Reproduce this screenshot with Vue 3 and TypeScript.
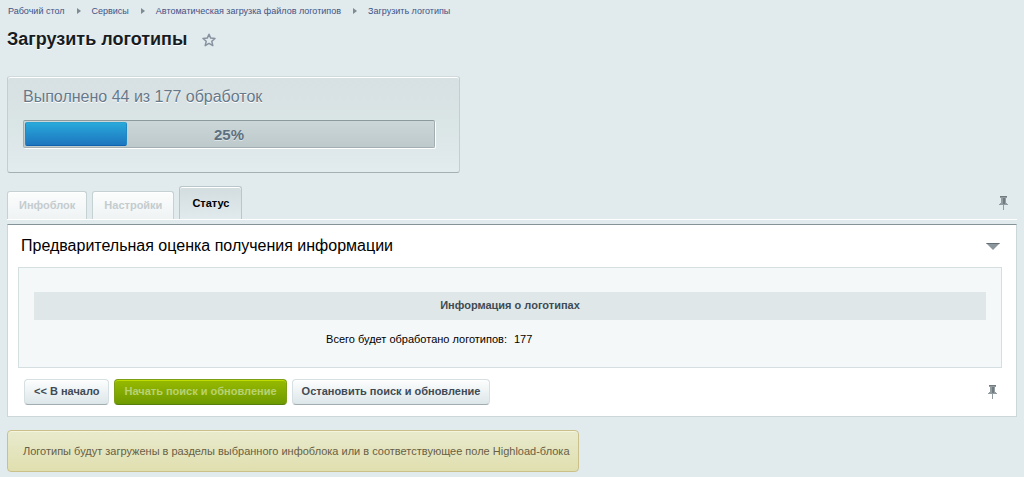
<script setup lang="ts">
import { ref } from 'vue'

interface Crumb {
  label: string
}

interface Tab {
  id: string
  label: string
  disabled: boolean
}

const crumbs: Crumb[] = [
  { label: 'Рабочий стол' },
  { label: 'Сервисы' },
  { label: 'Автоматическая загрузка файлов логотипов' },
  { label: 'Загрузить логотипы' },
]

const tabs: Tab[] = [
  { id: 'iblock', label: 'Инфоблок', disabled: true },
  { id: 'settings', label: 'Настройки', disabled: true },
  { id: 'status', label: 'Статус', disabled: false },
]

const activeTab = ref('status')
const done = ref(44)
const total = ref(177)
const percent = ref(25)
</script>

<template>
  <main class="page">
    <nav class="crumbs" aria-label="Навигация">
      <template v-for="(crumb, i) in crumbs" :key="crumb.label">
        <svg v-if="i > 0" class="crumb-arrow" viewBox="0 0 4 6" aria-hidden="true">
          <path d="M0 0 4 3 0 6Z" fill="#7d8b93" />
        </svg>
        <a href="#">{{ crumb.label }}</a>
      </template>
    </nav>

    <header class="heading">
      <h1>Загрузить логотипы</h1>
      <button class="icon-button" type="button" aria-label="Добавить в избранное">
        <svg width="14" height="14" viewBox="0 0 14 14" aria-hidden="true">
          <path
            d="M7 1.2 8.7 5.1 13 5.5 9.8 8.3 10.8 12.6 7 10.4 3.2 12.6 4.2 8.3 1 5.5 5.3 5.1Z"
            fill="none"
            stroke="#8792a0"
            stroke-width="1.5"
            stroke-linejoin="round"
          />
        </svg>
      </button>
    </header>

    <section class="progress-card">
      <div class="progress-title">Выполнено {{ done }} из {{ total }} обработок</div>
      <div
        class="bar"
        role="progressbar"
        :aria-valuenow="percent"
        aria-valuemin="0"
        aria-valuemax="100"
      >
        <div class="bar-fill" :style="{ width: percent + '%' }"></div>
        <span class="bar-label">{{ percent }}%</span>
      </div>
    </section>

    <div class="tab-row">
      <div class="tabs" role="tablist">
        <button
          v-for="tab in tabs"
          :key="tab.id"
          type="button"
          role="tab"
          class="tab"
          :class="{ active: tab.id === activeTab }"
          :aria-selected="tab.id === activeTab"
          :disabled="tab.disabled"
          @click="activeTab = tab.id"
        >
          {{ tab.label }}
        </button>
      </div>
      <button class="icon-button pin" type="button" aria-label="Закрепить вкладки">
        <svg width="9" height="14" viewBox="0 0 9 14" aria-hidden="true">
          <path d="M1 0H8V2H7V7H8V8H9V9H5V14H4V9H0V8H1V7H2V2H1Z" fill="#929da2" />
          <path d="M1 0H8V1H1ZM4 2H6V8H4Z" fill="#707a7f" />
        </svg>
      </button>
    </div>

    <section class="panel">
      <div class="panel-head">
        <h2>Предварительная оценка получения информации</h2>
        <button class="icon-button" type="button" aria-label="Свернуть">
          <svg width="14" height="7" viewBox="0 0 14 7" aria-hidden="true">
            <path d="M0 0H14L7 7Z" fill="#8b979c" />
            <path d="M0 0H14L13 1H1Z" fill="#626e74" />
          </svg>
        </button>
      </div>

      <div class="panel-body">
        <table class="info">
          <thead>
            <tr>
              <th colspan="2">Информация о логотипах</th>
            </tr>
          </thead>
          <tbody>
            <tr>
              <td class="name">Всего будет обработано логотипов:</td>
              <td class="value">{{ total }}</td>
            </tr>
          </tbody>
        </table>
      </div>

      <div class="panel-foot">
        <div class="buttons">
          <button class="btn" type="button">&lt;&lt; В начало</button>
          <button class="btn green" type="button" disabled>Начать поиск и обновление</button>
          <button class="btn" type="button">Остановить поиск и обновление</button>
        </div>
        <button class="icon-button" type="button" aria-label="Закрепить кнопки">
          <svg width="9" height="14" viewBox="0 0 9 14" aria-hidden="true">
            <path d="M1 0H8V2H7V7H8V8H9V9H5V14H4V9H0V8H1V7H2V2H1Z" fill="#929da2" />
            <path d="M1 0H8V1H1ZM4 2H6V8H4Z" fill="#707a7f" />
          </svg>
        </button>
      </div>
    </section>

    <p class="note">
      Логотипы будут загружены в разделы выбранного инфоблока или в соответствующее поле Highload-блока
    </p>
  </main>
</template>

<style>
body {
  background: #e1eaec;
}
</style>

<style scoped>
.page {
  padding: 4px 7px 6px;
  font-family: 'Liberation Sans', Arial, sans-serif;
  font-size: 11px;
  color: #000;
}

button {
  font-family: inherit;
}

.crumbs {
  display: flex;
  align-items: center;
  height: 14px;
  padding-left: 1px;
  font-size: 9px;
}

.crumbs a {
  color: #3f5387;
  text-decoration: none;
}

.crumb-arrow {
  width: 4px;
  height: 6px;
  margin: 0 11px 0 12px;
}

.heading {
  display: flex;
  align-items: center;
  gap: 15px;
  height: 24px;
  margin-top: 9px;
  margin-bottom: 25px;
}

h1 {
  margin: 0;
  font-size: 18px;
  line-height: 24px;
  color: #161c1f;
  text-shadow: 0 1px 0 #fff;
}

.icon-button {
  display: flex;
  padding: 0;
  border: 0;
  background: none;
  cursor: pointer;
}

.heading .icon-button {
  padding-top: 2px;
}

.progress-card {
  box-sizing: border-box;
  max-width: 453px;
  padding: 8px 24px 24px 15px;
  border: 1px solid #c3ced1;
  border-top-color: #d0d9db;
  border-bottom-color: #a3b0b4;
  border-radius: 3px;
  background: linear-gradient(#d7e0e2, #dae5e6 50%, #e2ebee);
  box-shadow: inset 0 1px 0 #fff;
}

.progress-title {
  font-size: 16px;
  line-height: 24px;
  color: #66788a;
  text-shadow: 0 1px 0 #fff;
}

.bar {
  position: relative;
  box-sizing: border-box;
  height: 28px;
  margin-top: 11px;
  padding: 1px;
  border: 1px solid #a2aeb1;
  border-top-color: #8c999d;
  border-radius: 2px;
  background: linear-gradient(#cbd6d8, #bec9cb);
  box-shadow: 1px 1px 0 #fff;
}

.bar-fill {
  box-sizing: border-box;
  height: 100%;
  border: 1px solid #2188c5;
  border-top-color: #2ba1d2;
  border-bottom-color: #0e62ae;
  border-radius: 2px;
  background: linear-gradient(#28a8da, #1d76bf);
}

.bar-label {
  position: absolute;
  inset: 0;
  text-align: center;
  font-size: 15px;
  font-weight: bold;
  line-height: 27px;
  color: #5d7080;
  text-shadow: 0 1px 0 #dde5e7;
}

.tab-row {
  display: flex;
  align-items: flex-end;
  justify-content: space-between;
  height: 33px;
  margin-top: 13px;
  border-bottom: 1px solid #fff;
}

.tabs {
  display: flex;
  align-items: flex-end;
  gap: 5px;
}

.tab {
  height: 28px;
  padding: 0 11px 2px;
  border: 1px solid #c6d1d4;
  border-bottom: 0;
  border-radius: 3px 3px 0 0;
  background: linear-gradient(#fcfdfd, #eff3f4);
  box-shadow: inset 0 1px 0 #fff;
  font-size: 11px;
  font-weight: bold;
  color: #c4cccf;
}

.tab.active {
  height: 33px;
  padding: 0 12px;
  border-color: #b9c6ca;
  background: linear-gradient(#d3dddf, #e1eaec);
  color: #000;
}

.pin {
  margin: 0 9px 9px 0;
}

.panel {
  margin-top: 4px;
  border: 1px solid #ccd7da;
  border-top: 1px solid #849397;
  background: #fff;
}

.panel-head {
  display: flex;
  align-items: center;
  justify-content: space-between;
  height: 42px;
  padding: 0 16px 0 13px;
}

h2 {
  margin: 0;
  font-size: 16px;
  font-weight: normal;
}

.panel-body {
  margin: 0 14px 0 10px;
  padding: 24px 15px 14px;
  border: 1px solid #d5dfe2;
  background: #f4f8f9;
}

.info {
  width: 100%;
  border-collapse: collapse;
}

.info th {
  height: 26px;
  padding: 0 0 2px;
  background: #dfe7e8;
  font-size: 11px;
  color: #3f4b54;
}

.info td {
  height: 28px;
  padding: 5px 0 0;
}

.info .name {
  width: 50%;
  padding-right: 3px;
  text-align: right;
}

.info .value {
  padding-left: 4px;
}

.panel-foot {
  display: flex;
  align-items: center;
  justify-content: space-between;
  height: 48px;
  padding: 0 19px 0 16px;
}

.buttons {
  display: flex;
  gap: 5px;
}

.btn {
  height: 26px;
  padding: 0 9px 2px;
  border: 1px solid #d6dfe2;
  border-bottom-color: #a1adb1;
  border-radius: 4px;
  background: linear-gradient(#fdfefe, #dce6e9);
  box-shadow: inset 0 1px 0 #fff;
  font-size: 11px;
  font-weight: bold;
  color: #3f4b54;
}

.btn.green {
  border-color: #7d9f18;
  border-bottom-color: #577f0c;
  background: linear-gradient(#97ba00, #6f9a00);
  box-shadow: inset 0 1px 0 #c0dc00;
  color: #b9d273;
}

.note {
  box-sizing: border-box;
  width: fit-content;
  margin: 13px 0 0;
  padding: 12px 8px 12px 15px;
  border: 1px solid #ccc08a;
  border-radius: 4px;
  background: linear-gradient(#e8ebcd, #e0dfaf);
  box-shadow: inset 0 1px 0 #f4f4df;
  line-height: 16px;
  color: #685f45;
}
</style>
